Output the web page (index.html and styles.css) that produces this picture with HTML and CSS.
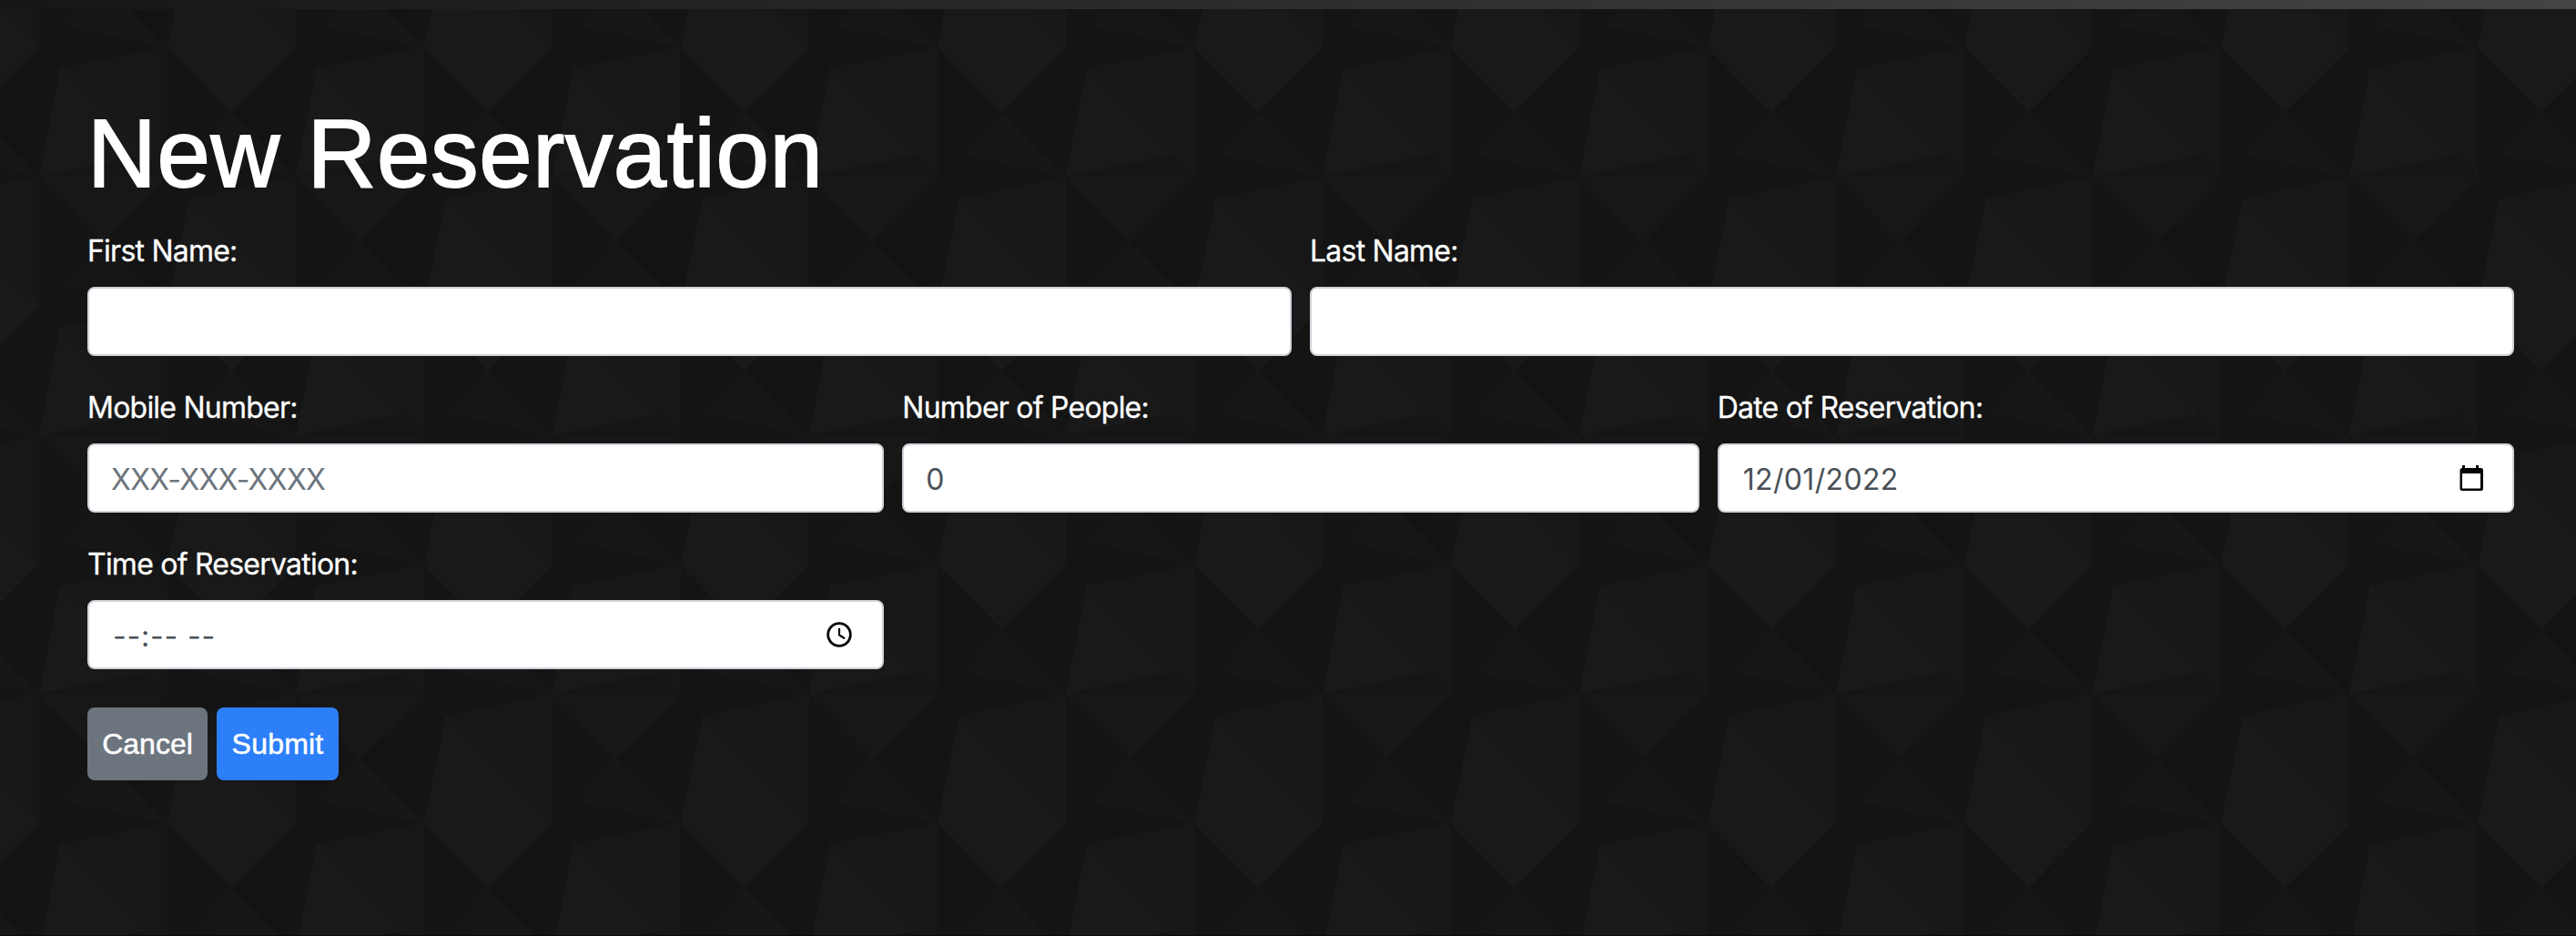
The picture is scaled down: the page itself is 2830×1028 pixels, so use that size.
FILE: index.html
```html
<!DOCTYPE html>
<html lang="en">
<head>
<meta charset="utf-8">
<title>New Reservation</title>
<link rel="stylesheet" href="styles.css">
</head>
<body>
<div class="topbar"></div>
<main class="page">
  <h1 class="title">New Reservation</h1>
  <form class="form">
    <div class="row row-2">
      <div class="group"><label class="label" for="first">First Name:</label><div class="control"><input class="input" id="first" type="text"></div></div>
      <div class="group"><label class="label" for="last">Last Name:</label><div class="control"><input class="input" id="last" type="text"></div></div>
    </div>
    <div class="row row-3">
      <div class="group"><label class="label" for="mobile">Mobile Number:</label><div class="control"><input class="input" id="mobile" type="text" placeholder="XXX-XXX-XXXX"></div></div>
      <div class="group"><label class="label" for="people">Number of People:</label><div class="control"><input class="input" id="people" type="text" value="0"></div></div>
      <div class="group"><label class="label" for="date">Date of Reservation:</label><div class="control"><input class="input date" id="date" type="text" value="12/01/2022">
        <svg class="icon" viewBox="0 0 32 32"><path fill-rule="evenodd" d="M7 2h3v3h12V2h3v3h2.500a2.500 2.500 0 0 1 2.500 2.500v20a2.500 2.500 0 0 1-2.500 2.500h-20.500a2.500 2.500 0 0 1-2.500-2.500v-20a2.500 2.500 0 0 1 2.500-2.500zM7 11v16.500h20V11z"/></svg></div></div>
    </div>
    <div class="row row-3">
      <div class="group"><label class="label" for="time">Time of Reservation:</label><div class="control"><input class="input time" id="time" type="text" value="--:-- --">
        <svg class="icon clock" viewBox="0 0 32 32" fill="none" stroke="#000"><circle cx="16" cy="16" r="12.300" stroke-width="2.800"/><path d="M16 9v7.500l6 3.700" stroke-width="2.200"/></svg></div></div>
    </div>
    <div class="actions">
      <button class="btn btn-cancel" type="button">Cancel</button>
      <button class="btn btn-submit" type="button">Submit</button>
    </div>
  </form>
</main>
</body>
</html>
```
FILE: styles.css
```css
* { box-sizing: border-box; }

body {
  margin: 0;
  height: 1028px;
  overflow: hidden;
  display: flex;
  flex-direction: column;
  font-family: Inter, "Liberation Sans", sans-serif;
  color: #fff;
  background-color: #141414;
}

.topbar {
  height: 10px;
  flex: none;
  background: linear-gradient(90deg, #161616, #444);
}

/* faceted dark tile, 282 x 284 */
.page {
  flex: 1;
  padding: 93px 68px 0 96px;
  border-bottom: 1px solid #0d0a0d;
  background: #141414 url("data:image/svg+xml,%3Csvg xmlns='http://www.w3.org/2000/svg' width='282' height='284'%3E%3Cpath fill='%23131313' d='M70 71L95 50L141 142zM211 213L236 192L282 284z'/%3E%3Cpath fill='%23191919' d='M0 0H141L70 71zM24 166L141 284H0zM164 23L259 118L141 142z'/%3E%3Cpath fill='%23171717' d='M24 166L141 142V284zM164 23L282 0V142L259 118zM141 142H282L211 213z'/%3E%3Cpath fill='%23151515' d='M141 142L259 118L282 142z'/%3E%3Cpath fill='%23161616' d='M70 71L141 142L28 118zM211 213L282 284L168 260z'/%3E%3C/svg%3E") 184px 42px;
}

.title {
  margin: 0;
  height: 132px;
  font: 400 105px/132px "Liberation Sans", Arial, sans-serif;
  letter-spacing: 0.600px;
  -webkit-text-stroke: 1.800px #fff;
}

.form { padding-top: 16px; }

.row { display: grid; column-gap: 20px; margin-bottom: 32px; }
.row-2 { grid-template-columns: repeat(2, 1fr); }
.row-3 { grid-template-columns: repeat(3, 1fr); }
.group { height: 140px; }

.label {
  display: block;
  height: 48px;
  margin-bottom: 16px;
  padding-top: 1px;
  font-size: 32px;
  line-height: 48px;
  letter-spacing: -0.770px;
  white-space: nowrap;
  -webkit-text-stroke: 0.300px #fff;
}

.control {
  display: flex;
  align-items: center;
  height: 76px;
  padding: 0 30px 0 24px;
  background: #fff;
  border: 2px solid #ced4da;
  border-radius: 8px;
}

.input {
  flex: 1;
  min-width: 0;
  height: 50px;
  padding: 2px 0 0;
  border: 0;
  outline: 0;
  background: none;
  color: #495057;
  font: 400 32px/48px Inter, "Liberation Sans", sans-serif;
}

.input::placeholder {
  color: #6c757d;
  opacity: 1;
  letter-spacing: -0.680px;
}

.date { padding-left: 2px; letter-spacing: 0.350px; }
.time { padding-left: 2px; letter-spacing: 0.800px; }

.icon { width: 32px; height: 32px; flex: none; }
.clock { margin-right: 1px; }

.actions { display: flex; gap: 10px; padding-top: 10px; }

.btn {
  height: 80px;
  padding: 0;
  border: 0;
  border-radius: 8px;
  color: #fff;
  font: 400 32px/80px "Liberation Sans", Arial, sans-serif;
  -webkit-text-stroke: 0.500px #fff;
}

.btn-cancel { width: 132px; background: #6c757d; }
.btn-submit { width: 134px; background: #2d7ff9; letter-spacing: 0.200px; }
```
